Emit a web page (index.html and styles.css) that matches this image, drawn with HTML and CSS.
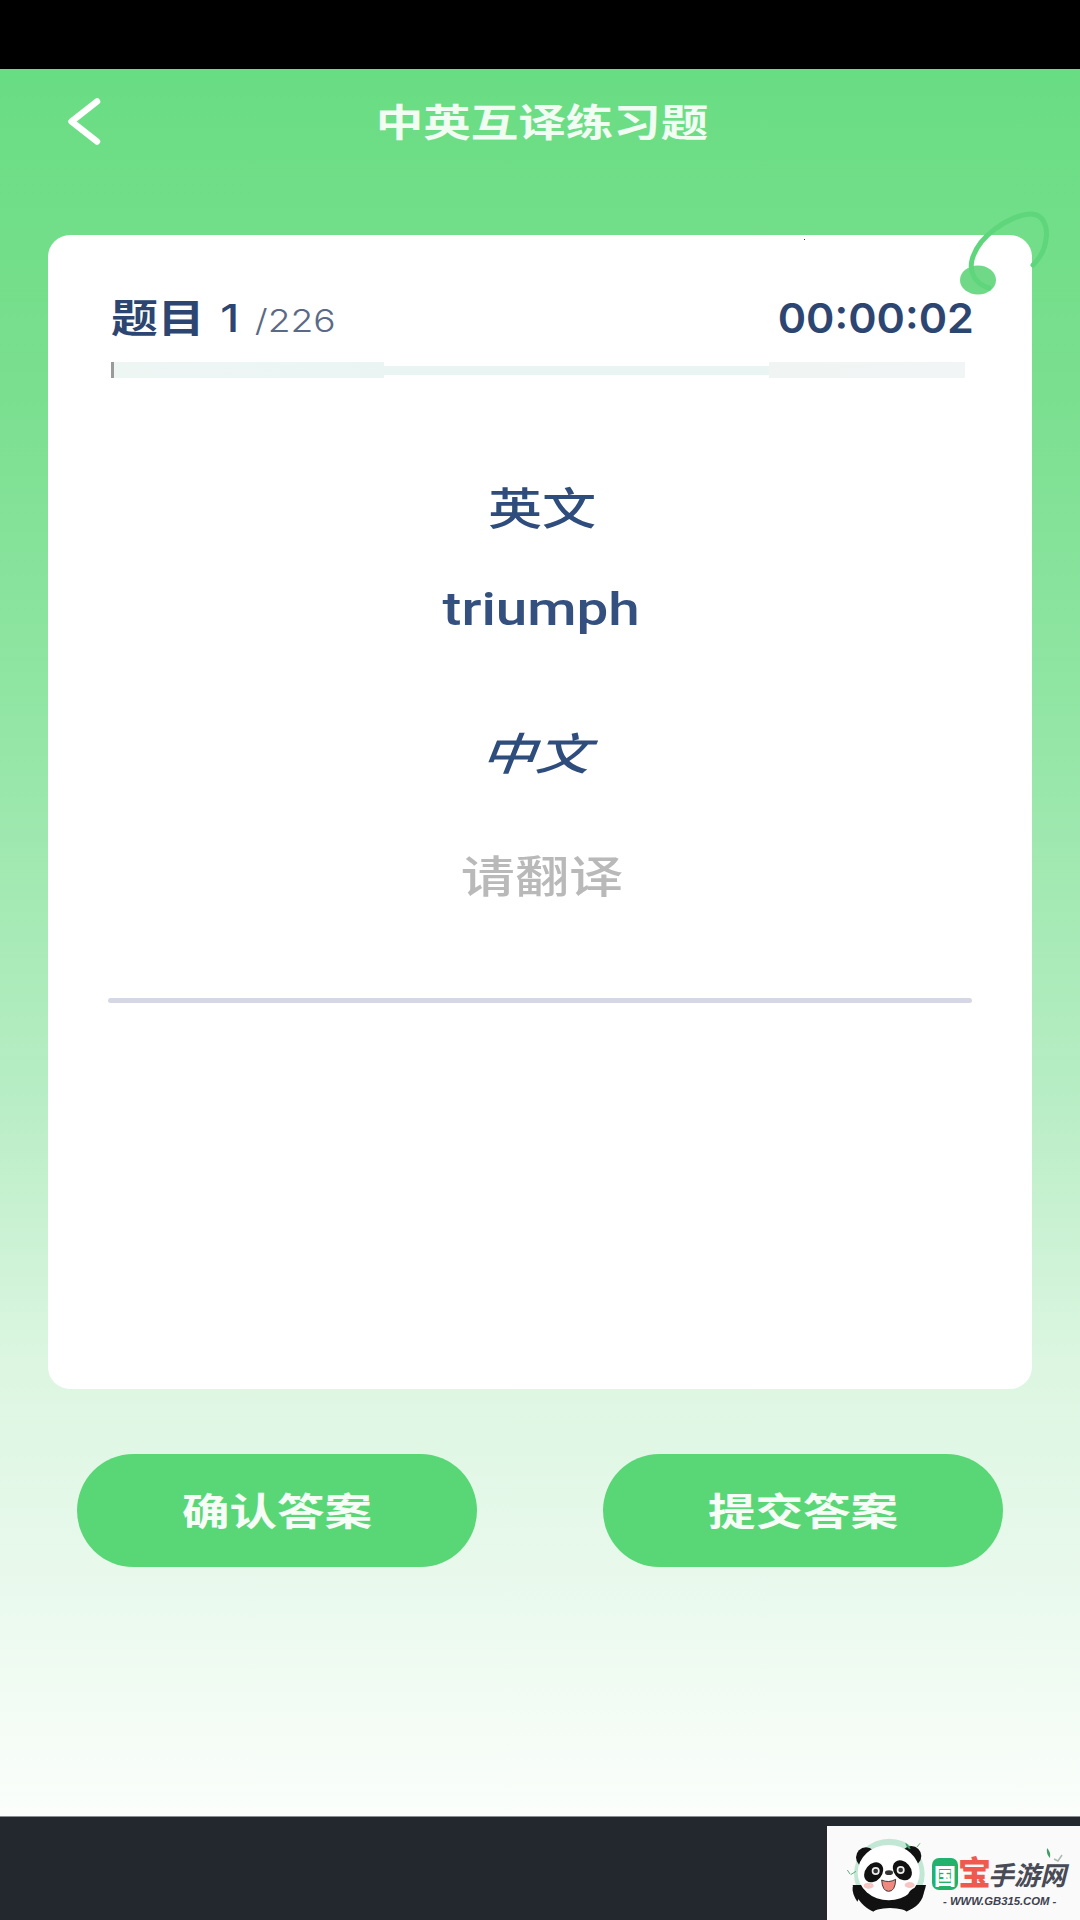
FILE: index.html
```html
<!DOCTYPE html>
<html lang="zh-CN">
<head>
<meta charset="utf-8">
<title>中英互译练习题</title>
<link rel="stylesheet" href="styles.css">
</head>
<body>
<div class="screen">
  <div class="status"></div>
  <main class="main">
    <header class="nav">
      <svg class="back" viewBox="0 0 34 47" width="34" height="47"><path d="M30 3.5 L4.5 23.5 L30 43.5" fill="none" stroke="#fff" stroke-width="6.5" stroke-linecap="round" stroke-linejoin="round"/></svg>
      <h1 class="title"><span class="wide wide-title">中英互译练习题</span></h1>
      <span></span>
    </header>
    <section class="card">
      <i class="speck"></i>
      <svg class="ring" viewBox="0 0 110 100" width="110" height="100">
        <ellipse cx="25" cy="70" rx="18" ry="14.5" fill="#6fd988"/>
        <path d="M36 78 C22 74 16 62 19 50 C22 38 30 28 42 19 C54 10 68 4 78 4 C90 4 95 16 93 29 C92 40 86 49 80 55" fill="none" stroke="#5fd67b" stroke-width="5" stroke-linecap="round"/>
      </svg>
      <div class="card-head">
        <div class="count"><span class="wide-left"><b class="count-now">题目</b><span class="count-num">1</span><span class="count-total">/226</span></span></div>
        <div class="timer"><span class="wide-right">00:00:02</span></div>
      </div>
      <div class="progress"><i class="progress-fill"></i></div>
      <div class="qa">
        <div class="label label-en"><span class="wide">英文</span></div>
        <div class="word"><span class="wide">triumph</span></div>
        <div class="label label-zh"><span class="wide skew">中文</span></div>
        <div class="hint"><span class="wide">请翻译</span></div>
      </div>
      <div class="rule"></div>
    </section>
    <div class="actions">
      <button class="btn"><span class="wide wide-btn">确认答案</span></button>
      <button class="btn"><span class="wide wide-btn">提交答案</span></button>
    </div>
  </main>
  <footer class="foot">
    <div class="brand">
      <svg class="panda" viewBox="0 0 330 270" width="110" height="90">
        <circle cx="148" cy="132" r="106" fill="#c3e7d5"/>
        <path d="M38 165 C50 225 100 256 150 256 C205 256 248 220 258 165 Z" fill="#111"/>
        <ellipse cx="150" cy="250" rx="52" ry="16" fill="#fafafa"/>
        <circle cx="78" cy="82" r="30" fill="#111"/>
        <circle cx="214" cy="78" r="30" fill="#111"/>
        <ellipse cx="146" cy="128" rx="93" ry="83" fill="#fff"/>
        <ellipse cx="101" cy="127" rx="25" ry="33" transform="rotate(40 101 127)" fill="#111"/>
        <ellipse cx="187" cy="121" rx="25" ry="33" transform="rotate(-40 187 121)" fill="#111"/>
        <circle cx="107" cy="123" r="12" fill="#eee"/><circle cx="107" cy="123" r="7" fill="#333"/>
        <circle cx="182" cy="120" r="12" fill="#eee"/><circle cx="182" cy="120" r="7" fill="#333"/>
        <ellipse cx="147" cy="128" rx="12" ry="7" fill="#333"/>
        <path d="M125 150 Q146 160 167 148 Q166 184 146 184 Q127 184 125 150 Z" fill="#ee8a7e" stroke="#222" stroke-width="2.5"/>
        <ellipse cx="86" cy="167" rx="15" ry="9" fill="#f6c6c2"/>
        <ellipse cx="209" cy="165" rx="15" ry="9" fill="#f6c6c2"/>
        <path d="M205 192 C212 172 240 166 250 178 C256 194 240 232 205 240 Z" fill="#111"/>
        <path d="M38 170 C50 166 62 172 64 190 L52 215 C42 200 36 185 38 170 Z" fill="#111"/>
        <path d="M196 38 Q208 44 212 58 Q198 54 196 38 Z" fill="#3f9e63"/>
        <path d="M230 52 L240 40 M32 134 L48 124 M22 120 L30 132" stroke="#5fae7c" stroke-width="3" fill="none"/>
      </svg>
      <div class="brand-text">
        <div class="brand-name"><span class="brand-guo"><span class="brand-guo-glyph">国</span></span><span class="brand-bao">宝</span><span class="brand-rest">手游网</span></div>
        <div class="brand-url">- WWW.GB315.COM -</div>
      </div>
      <svg class="brand-leaf" viewBox="0 0 20 14" width="20" height="14"><path d="M2 0 Q6 4 5 10 Q1 6 2 0 Z" fill="#3f9e63"/><path d="M9 11 L13 13 L17 7" fill="none" stroke="#a8b8ae" stroke-width="1.5"/></svg>
    </div>
  </footer>
</div>
</body>
</html>
```
FILE: styles.css
```css
* { box-sizing: border-box; }
html, body { margin: 0; padding: 0; }
body { font-family: "Noto Sans CJK SC", "Liberation Sans", sans-serif; }
.screen { width: 1080px; height: 1920px; display: flex; flex-direction: column; overflow: hidden; background: #fff; }
.status { height: 69px; background: #000; flex: none; }
.main {
  flex: 1;
  background: linear-gradient(180deg, #69dd83 0%, #7adf8f 18%, #8fe5a2 35%, #b6edc3 58%, #dcf6e1 74%, #e8f9ec 86%, #fbfefb 100%);
}
.nav { height: 108px; margin-bottom: 58px; padding: 0 63px 0 67px; display: grid; grid-template-columns: 1fr auto 1fr; align-items: center; }
.back { display: block; margin-top: -3px; }
.title { margin: 0 0 6px; font-size: 38px; line-height: 50px; font-weight: 700; color: #f1fcf3; }
.wide, .wide-left, .wide-right { display: inline-block; white-space: nowrap; }
.wide { transform: scaleX(1.23); }
.wide-title { transform: scaleX(1.25); }
.wide-btn { transform: scaleX(1.25); margin-bottom: 4px; }
.wide-left { transform: scaleX(1.2); transform-origin: left center; }
.wide-right { transform: scaleX(1.05); transform-origin: right center; }
.skew { transform: scaleX(1.23) skewX(-18deg); }
.card { position: relative; margin: 0 48px; height: 1154px; padding-top: 58px; background: #fff; border-radius: 22px; }
.ring { position: absolute; left: 905px; top: -25px; }
.speck { position: absolute; left: 756px; top: 4px; width: 1px; height: 1px; background: #333; }
.card-head { height: 50px; padding: 0 58px 0 63px; display: flex; justify-content: space-between; align-items: center; color: #2d4671; }
.count { font-size: 39px; line-height: 50px; }
.count-now { font-weight: 700; }
.count-num { font-family: "Inter", sans-serif; font-weight: 500; font-size: 38px; margin-left: 13px; }
.count-total { font-family: "Inter", sans-serif; font-weight: 300; font-size: 31px; color: #5a6a86; margin-left: 13px; }
.timer { font-family: "Inter", "Liberation Sans", sans-serif; font-size: 41px; line-height: 50px; font-weight: 600; }
.progress {
  margin: 19px 67px 0 63px; height: 16px;
  background:
    linear-gradient(90deg, #eef6f4, #eaf5f3) left center / 32% 100% no-repeat,
    linear-gradient(90deg, #f0f5f4, #f1f5f5) right center / 23% 100% no-repeat,
    linear-gradient(#e9f5f2, #e9f5f2) center / 100% 9px no-repeat;
}
.progress-fill { display: block; width: 3px; height: 100%; background: #9a9a9a; }
.qa { display: flex; flex-direction: column; align-items: center; padding-left: 3px; }
.label { font-size: 44px; line-height: 60px; font-weight: 500; color: #2f4d7c; }
.label-en { margin-top: 98px; }
.label-zh { margin-top: 82px; }
.word { margin-top: 43px; font-family: "Roboto", sans-serif; font-size: 46px; line-height: 60px; font-weight: 500; color: #34507e; }
.hint { margin-top: 63px; font-size: 44px; line-height: 60px; font-weight: 500; color: #b9b9b9; }
.rule { margin: 94px 60px 0; height: 5px; background: #d6d7e5; border-radius: 3px; }
.actions { margin-top: 65px; padding: 0 77px; display: flex; justify-content: space-between; }
.btn { width: 400px; height: 113px; border: 0; border-radius: 57px; background: #59d675; color: #f6fdf7; font-family: inherit; font-size: 38px; font-weight: 700; padding: 0; }
.foot { height: 104px; flex: none; background: #23282f; border-top: 1px solid #8a8d91; display: flex; justify-content: flex-end; align-items: flex-end; }
.brand { position: relative; width: 253px; height: 94px; background: #fafafa; display: flex; align-items: flex-end; padding-left: 13px; }
.brand-leaf { position: absolute; left: 218px; top: 22px; }
.panda { display: block; flex: none; }
.brand-text { margin-left: -18px; padding-bottom: 12px; display: flex; flex-direction: column; align-items: flex-start; }
.brand-name { display: flex; align-items: flex-end; height: 38px; }
.brand-guo { width: 26px; height: 32px; border-radius: 7px; background: #23b26c; display: flex; align-items: center; justify-content: center; }
.brand-guo-glyph { font-size: 22px; line-height: 22px; font-weight: 900; color: #fff; }
.brand-bao { font-size: 33px; line-height: 37px; font-weight: 900; color: #ef5a50; }
.brand-rest { margin-left: -3px; font-size: 26px; line-height: 32px; font-weight: 700; font-style: italic; color: #484b56; }
.brand-url { margin: 4px 0 0 11px; font-family: "Liberation Sans", sans-serif; font-size: 11.3px; line-height: 14px; font-weight: 700; font-style: italic; color: #3d4150; white-space: nowrap; }
```
